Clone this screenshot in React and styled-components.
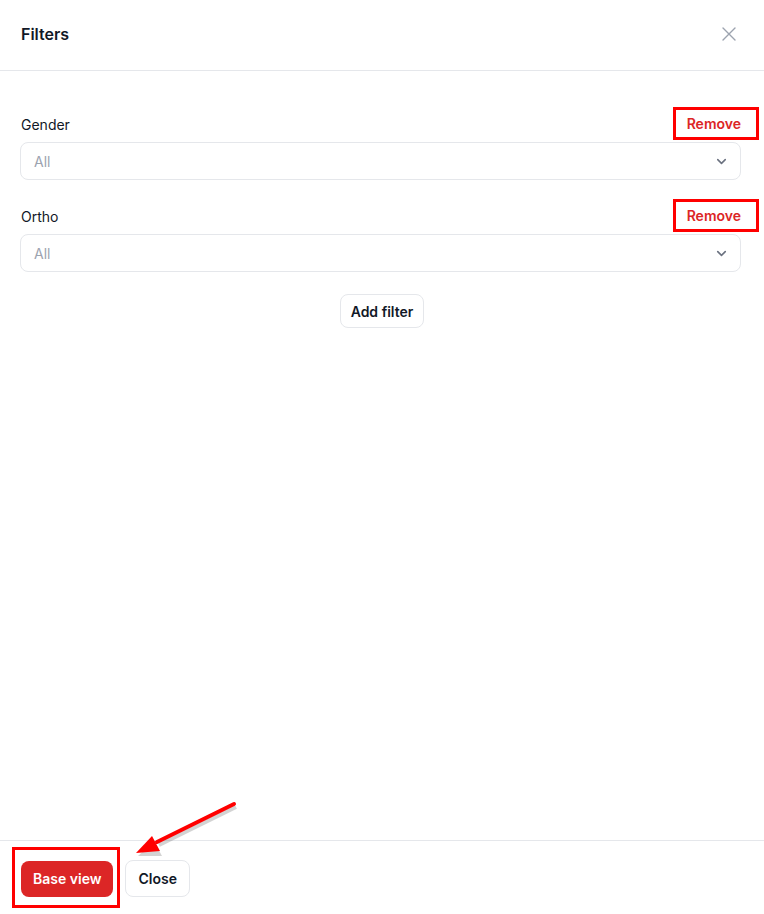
import styled, { createGlobalStyle } from "styled-components";

const GlobalStyle = createGlobalStyle`
  * { box-sizing: border-box; }
  body {
    margin: 0;
    font-family: Inter, "Noto Sans", sans-serif;
    color: #111827;
    background: #fff;
  }
`;

const filters = ["Gender", "Ortho"];

function Chevron() {
  return (
    <svg width="15" height="15" viewBox="0 0 24 24" fill="none" stroke="#6b7280" strokeWidth="2.5" strokeLinecap="round" strokeLinejoin="round">
      <path d="M6 9l6 6 6-6" />
    </svg>
  );
}

export default function App() {
  return (
    <Page>
      <GlobalStyle />
      <Header>
        <Title>Filters</Title>
        <CloseIcon aria-label="Close">
          <svg width="16" height="16" viewBox="0 0 16 16" fill="none" stroke="#9ca3af" strokeWidth="1.4" strokeLinecap="round">
            <path d="M2 2l12 12M14 2L2 14" />
          </svg>
        </CloseIcon>
      </Header>

      <Body>
        {filters.map((name) => (
          <Field key={name}>
            <LabelRow>
              <Label>{name}</Label>
              <Marked>
                <RemoveButton>Remove</RemoveButton>
                <Mark $top={-7} $right={-18} $bottom={-6} $left={-14} />
              </Marked>
            </LabelRow>
            <Select>
              <Placeholder>All</Placeholder>
              <Chevron />
            </Select>
          </Field>
        ))}
        <AddRow>
          <Button>Add filter</Button>
        </AddRow>
      </Body>

      <Footer>
        <Marked>
          <PrimaryButton>Base view</PrimaryButton>
          <Mark $top={-14} $right={-7} $bottom={-11} $left={-9} />
        </Marked>
        <Button>Close</Button>
        <Arrow width="130" height="70" viewBox="0 0 130 70">
          <g transform="translate(2,3)" opacity="0.25">
            <line x1="109" y1="8" x2="32" y2="46" stroke="#555" strokeWidth="4" />
            <polygon points="11,57 35,57 27,42" fill="#555" />
          </g>
          <line x1="109" y1="8" x2="32" y2="46" stroke="#ff0000" strokeWidth="4" strokeLinecap="round" />
          <polygon points="11,57 35,55 27,40" fill="#ff0000" />
        </Arrow>
      </Footer>
    </Page>
  );
}

//----- Styled Components

const Page = styled.div`
  position: relative;
  display: flex;
  flex-direction: column;
  height: 100vh;
  width: 100vw;
`;

const Header = styled.div`
  display: flex;
  align-items: center;
  justify-content: space-between;
  height: 71px;
  padding: 0 27px 2px 21px;
  border-bottom: 1px solid #e5e7eb;
`;

const Title = styled.h1`
  margin: 0;
  font-size: 16px;
  font-weight: 600;
  color: #111827;
`;

const CloseIcon = styled.button`
  display: flex;
  align-items: center;
  justify-content: center;
  padding: 0;
  border: none;
  background: none;
  cursor: pointer;
`;

const Body = styled.div`
  flex: 1;
  display: flex;
  flex-direction: column;
  gap: 26px;
  padding: 43px 23px 0 20px;
`;

const Field = styled.div`
  display: flex;
  flex-direction: column;
  gap: 8px;
`;

const LabelRow = styled.div`
  display: flex;
  align-items: center;
  justify-content: space-between;
  height: 20px;
  padding-left: 1px;
`;

const Label = styled.label`
  font-size: 14px;
  color: #111827;
`;

const Marked = styled.div`
  position: relative;
  display: inline-flex;
`;

const Mark = styled.span`
  position: absolute;
  top: ${(p) => p.$top}px;
  right: ${(p) => p.$right}px;
  bottom: ${(p) => p.$bottom}px;
  left: ${(p) => p.$left}px;
  border: 3px solid #ff0000;
  pointer-events: none;
`;

const RemoveButton = styled.button`
  padding: 0;
  border: none;
  background: none;
  font-family: inherit;
  font-size: 14px;
  font-weight: 600;
  line-height: 20px;
  color: #dc2626;
  cursor: pointer;
`;

const Select = styled.div`
  display: flex;
  align-items: center;
  justify-content: space-between;
  height: 38px;
  padding: 0 11px 0 13px;
  border: 1px solid #e5e7eb;
  border-radius: 8px;
  background: #fff;
`;

const Placeholder = styled.span`
  font-size: 14px;
  color: #9ca3af;
`;

const AddRow = styled.div`
  display: flex;
  justify-content: center;
  margin-top: -4px;
  padding-left: 3px;
`;

const Button = styled.button`
  height: 34px;
  padding: 0 10px;
  border: 1px solid #e5e7eb;
  border-radius: 8px;
  background: #fff;
  font-family: inherit;
  font-size: 14px;
  font-weight: 600;
  color: #111827;
  cursor: pointer;
`;

const Footer = styled.div`
  position: relative;
  display: flex;
  align-items: center;
  gap: 12px;
  height: 74px;
  padding: 2px 21px 0;
  border-top: 1px solid #e5e7eb;

  ${Button} {
    height: 37px;
    padding: 0 12px;
  }
`;

const PrimaryButton = styled.button`
  height: 36px;
  padding: 0 12px;
  border: none;
  border-radius: 8px;
  background: #dc2626;
  font-family: inherit;
  font-size: 14px;
  font-weight: 600;
  color: #fff;
  cursor: pointer;
`;

const Arrow = styled.svg`
  position: absolute;
  left: 125px;
  top: -45px;
  pointer-events: none;
`;
